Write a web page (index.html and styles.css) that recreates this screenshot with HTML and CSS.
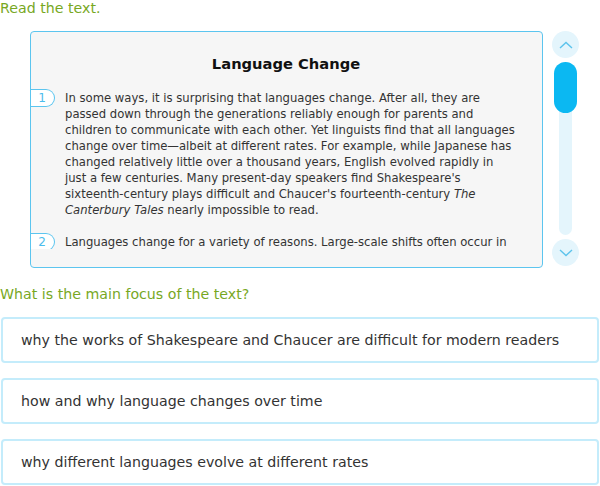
FILE: index.html
```html
<!DOCTYPE html>
<html lang="en">
<head>
<meta charset="utf-8">
<title>Language Change</title>
<link rel="stylesheet" href="styles.css">
</head>
<body>
<div class="page">
  <p class="prompt">Read the text.</p>

  <div class="reader">
    <div class="passage">
      <div class="passage-scroll">
        <h2 class="passage-title">Language Change</h2>
        <p class="para"><span class="para-num">1</span>In some ways, it is surprising that languages change. After all, they are passed down through the generations reliably enough for parents and children to communicate with each other. Yet linguists find that all languages change over time—albeit at different rates. For example, while Japanese has changed relatively little over a thousand years, English evolved rapidly in just a few centuries. Many present-day speakers find Shakespeare's sixteenth-century plays difficult and Chaucer's fourteenth-century <em>The Canterbury Tales</em> nearly impossible to read.</p>
        <p class="para"><span class="para-num">2</span>Languages change for a variety of reasons. Large-scale shifts often occur in response to social, economic, and political pressures.</p>
      </div>
    </div>

    <div class="scrollbar">
      <button class="scroll-btn" type="button" aria-label="Scroll up">
        <svg width="14" height="8" viewBox="0 0 14 8"><path d="M1 7 L7 1.5 L13 7" fill="none" stroke="#5cc3ec" stroke-width="1.4"/></svg>
      </button>
      <div class="scroll-track"><div class="scroll-thumb"></div></div>
      <button class="scroll-btn" type="button" aria-label="Scroll down">
        <svg width="14" height="8" viewBox="0 0 14 8"><path d="M1 1 L7 6.5 L13 1" fill="none" stroke="#5cc3ec" stroke-width="1.4"/></svg>
      </button>
    </div>
  </div>

  <p class="prompt question">What is the main focus of the text?</p>

  <div class="choices">
    <div class="choice">why the works of Shakespeare and Chaucer are difficult for modern readers</div>
    <div class="choice">how and why language changes over time</div>
    <div class="choice">why different languages evolve at different rates</div>
  </div>
</div>
</body>
</html>
```

FILE: styles.css
```css
html, body {
  margin: 0;
  padding: 0;
  background: #fff;
}

body {
  font-family: Verdana, "DejaVu Sans", sans-serif;
  color: #333;
}

.page {
  width: 600px;
}

.prompt {
  margin: 0;
  font-size: 14.2px;
  line-height: 16px;
  color: #78a81f;
}

.reader {
  display: flex;
  align-items: flex-start;
  gap: 9px;
  margin: 15px 0 0 30px;
}

.passage {
  width: 511px;
  height: 235px;
  border: 1px solid #5cc5ef;
  border-radius: 4px;
  background: #f6f6f6;
  overflow: hidden;
}

.passage-scroll {
  height: 217px;
  overflow: hidden;
  padding: 0 26px 0 34px;
}

.passage-title {
  margin: 22px 3px 16px -6px;
  font-size: 14.7px;
  line-height: 20px;
  font-weight: bold;
  text-align: center;
  color: #111;
}

.para {
  position: relative;
  margin: 0 0 16px;
  font-size: 11.63px;
  line-height: 16px;
  color: #333;
}

.para em {
  font-style: italic;
}

.para-num {
  position: absolute;
  left: -35px;
  top: -1px;
  width: 24px;
  height: 16px;
  border: 1px solid #5cc5ef;
  border-left: none;
  border-radius: 0 9px 9px 0;
  background: #fff;
  color: #4cbcec;
  font-size: 12px;
  line-height: 16px;
  text-align: center;
  box-sizing: content-box;
}

.scrollbar {
  display: flex;
  flex-direction: column;
  align-items: center;
  width: 27px;
  gap: 4px;
}

.scroll-btn {
  width: 27px;
  height: 27px;
  padding: 0;
  border: none;
  border-radius: 50%;
  background: #e4f5fc;
  display: flex;
  align-items: center;
  justify-content: center;
}

.scroll-track {
  position: relative;
  width: 13px;
  height: 173px;
  border-radius: 7px;
  background: #e4f5fc;
}

.scroll-thumb {
  position: absolute;
  left: -5px;
  top: 0;
  width: 23px;
  height: 51px;
  border-radius: 12px;
  background: #0bb8f2;
}

.question {
  margin-top: 18px;
}

.choices {
  display: flex;
  flex-direction: column;
  gap: 15px;
  margin-top: 15px;
  padding-left: 1px;
}

.choice {
  height: 42px;
  border: 2px solid #c4ecfb;
  border-radius: 4px;
  display: flex;
  align-items: center;
  padding: 0 0 0 18px;
  box-sizing: content-box;
  width: 576px;
  font-size: 14.2px;
  color: #333;
}
```
